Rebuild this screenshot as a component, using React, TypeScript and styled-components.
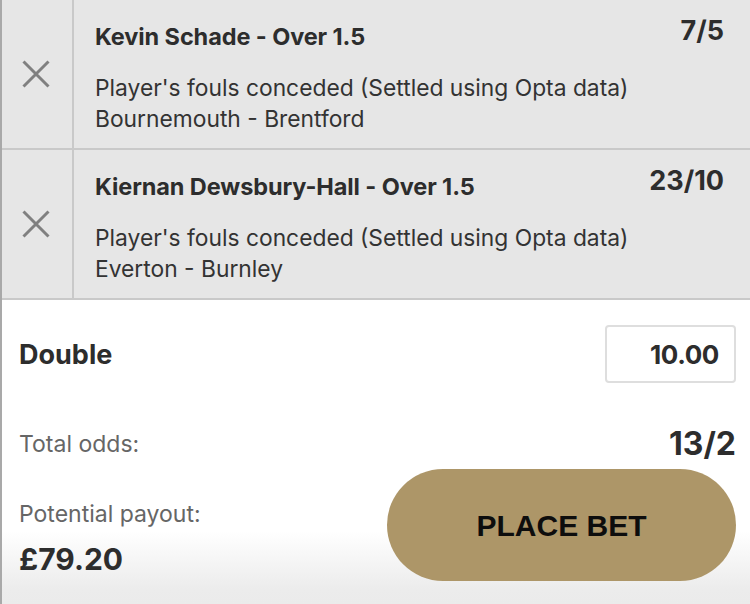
import React from "react";
import styled, { createGlobalStyle } from "styled-components";

const Global = createGlobalStyle`
  html, body { margin: 0; padding: 0; background: #fff; }
  body { font-family: Inter, Roboto, "Liberation Sans", Arial, sans-serif; }
  * { box-sizing: border-box; }
`;

const Slip = styled.div`
  width: 750px;
  height: 604px;
  border-left: 2px solid #a9a9a9;
  display: flex;
  flex-direction: column;
  overflow: hidden;
`;

const BetRow = styled.div`
  display: grid;
  grid-template-columns: 72px 1fr;
  height: 150px;
  background: #e6e6e6;
  border-bottom: 2px solid #c9c9c9;
`;

const RemoveCell = styled.button`
  border: none;
  border-right: 2px solid #c9c9c9;
  background: transparent;
  padding: 0 2px 0 0;
  display: flex;
  align-items: center;
  justify-content: center;
  cursor: pointer;
`;

const Details = styled.div`
  padding: 16px 26px 0 21px;
  color: #2d2d2d;
`;

const Header = styled.div`
  display: flex;
  justify-content: space-between;
  align-items: flex-start;
`;

const Title = styled.div`
  margin-top: 7px;
  font-size: 23.5px;
  font-weight: 700;
  letter-spacing: -0.1px;
  line-height: 28px;
`;

const Odds = styled.div`
  font-size: 27px;
  font-weight: 700;
  line-height: 30px;
`;

const Desc = styled.div`
  margin-top: 21px;
  font-size: 22.8px;
  line-height: 31px;
  color: #333;
`;

const Footer = styled.div`
  flex: 1;
  padding: 25px 14px 0 17px;
  background: linear-gradient(to bottom, #ffffff 0%, #ffffff 76%, #ececec 95%, #ebebeb 100%);
  display: flex;
  flex-direction: column;
`;

const FooterRow = styled.div<{ $gap?: number }>`
  display: flex;
  justify-content: space-between;
  align-items: center;
  margin-top: ${(p) => p.$gap ?? 0}px;
`;

const StakeLabel = styled.div`
  font-size: 27px;
  font-weight: 700;
  color: #2d2d2d;
`;

const StakeInput = styled.div`
  width: 131px;
  height: 58px;
  border: 2px solid #dedede;
  border-radius: 4px;
  display: flex;
  align-items: center;
  justify-content: flex-end;
  padding-right: 15px;
  font-size: 26px;
  font-weight: 700;
  letter-spacing: -0.4px;
  color: #2d2d2d;
`;

const InfoLabel = styled.div`
  font-size: 23px;
  line-height: 27px;
  color: #666;
`;

const TotalOdds = styled.div`
  font-size: 32px;
  line-height: 36px;
  font-weight: 700;
  color: #2d2d2d;
`;

const PayoutBlock = styled.div`
  align-self: flex-start;
  padding-top: 32px;
  display: flex;
  flex-direction: column;
  gap: 13px;
`;

const Payout = styled.div`
  font-size: 30px;
  line-height: 36px;
  font-weight: 700;
  color: #2d2d2d;
`;

const PlaceBet = styled.button`
  width: 349px;
  height: 112px;
  border: none;
  border-radius: 56px;
  padding-top: 3px;
  background: #ad9668;
  color: #0d0d0d;
  font-family: "Liberation Sans", Arial, sans-serif;
  font-size: 30px;
  font-weight: 700;
  cursor: pointer;
`;

const CloseIcon = () => (
  <svg width="28" height="28" viewBox="0 0 28 28">
    <path d="M1.5 1.5 L26.5 26.5 M26.5 1.5 L1.5 26.5" stroke="#808080" strokeWidth="3" fill="none" />
  </svg>
);

const bets = [
  {
    title: "Kevin Schade - Over 1.5",
    odds: "7/5",
    market: "Player's fouls conceded (Settled using Opta data)",
    event: "Bournemouth - Brentford",
  },
  {
    title: "Kiernan Dewsbury-Hall - Over 1.5",
    odds: "23/10",
    market: "Player's fouls conceded (Settled using Opta data)",
    event: "Everton - Burnley",
  },
];

export default function App() {
  return (
    <>
      <Global />
      <Slip>
        {bets.map((b) => (
          <BetRow key={b.title}>
            <RemoveCell aria-label="Remove">
              <CloseIcon />
            </RemoveCell>
            <Details>
              <Header>
                <Title>{b.title}</Title>
                <Odds>{b.odds}</Odds>
              </Header>
              <Desc>
                {b.market}
                <br />
                {b.event}
              </Desc>
            </Details>
          </BetRow>
        ))}
        <Footer>
          <FooterRow>
            <StakeLabel>Double</StakeLabel>
            <StakeInput>10.00</StakeInput>
          </FooterRow>
          <FooterRow $gap={43}>
            <InfoLabel>Total odds:</InfoLabel>
            <TotalOdds>13/2</TotalOdds>
          </FooterRow>
          <FooterRow $gap={7}>
            <PayoutBlock>
              <InfoLabel>Potential payout:</InfoLabel>
              <Payout>£79.20</Payout>
            </PayoutBlock>
            <PlaceBet>PLACE BET</PlaceBet>
          </FooterRow>
        </Footer>
      </Slip>
    </>
  );
}
